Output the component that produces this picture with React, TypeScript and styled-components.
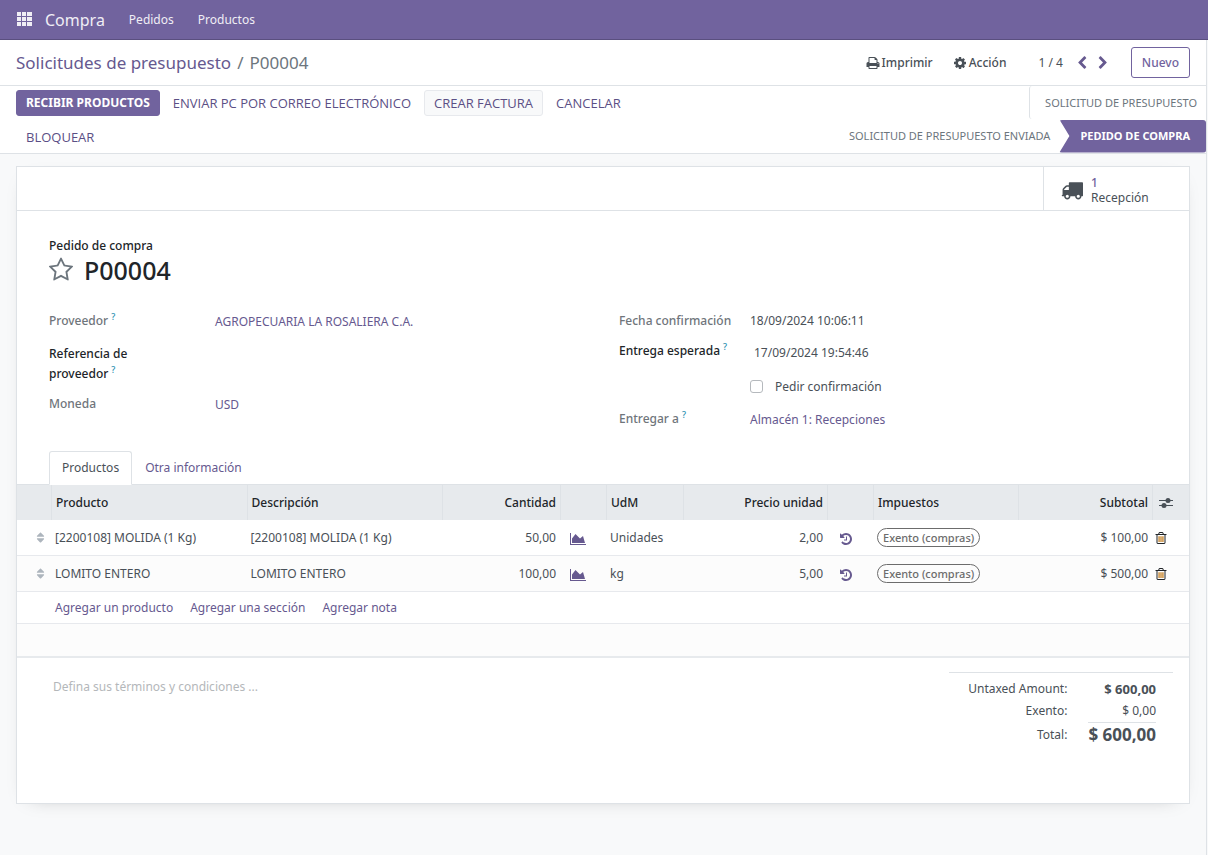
import React from 'react';
import styled, { createGlobalStyle } from 'styled-components';
import { FaSort } from 'react-icons/fa';

const brand = '#71639e';
const link = '#66598f';
const line = '#dee2e6';

const GlobalStyle = createGlobalStyle`
  * { box-sizing: border-box; }
  html, body, #root { min-height: 100vh; }
  body {
    margin: 0;
    background: #f8f9fa;
    color: #495057;
    font: 400 12px/20px "Noto Sans", "Open Sans", sans-serif;
  }
  button, input, textarea { font: inherit; color: inherit; }
  button { padding: 0; border: 0; background: none; cursor: pointer; }
  a { color: ${link}; text-decoration: none; }
`;

const Page = styled.div`
  min-height: 100vh;
  margin-right: 1px;
  border-right: 1px solid ${line};
`;

const Navbar = styled.nav`
  display: flex;
  align-items: center;
  height: 40px;
  margin-right: -2px;
  padding: 0 16px;
  gap: 24px;
  background: ${brand};
  border-bottom: 1px solid #5a4f7f;
  a { color: #f0eef5; }
`;

const AppsButton = styled.button`
  display: flex;
  margin-right: -12px;
  color: #f0eef5;
`;

const Brand = styled.a`
  font-size: 16px;
`;

const ControlPanel = styled.header`
  display: flex;
  align-items: center;
  height: 46px;
  padding: 0 16px;
  background: #fff;
  border-bottom: 1px solid ${line};
`;

const Breadcrumb = styled.nav`
  flex: 1;
  display: flex;
  gap: 6px;
  font-size: 17px;
  color: #6c757d;
`;

const Menu = styled.button`
  display: flex;
  align-items: center;
  gap: 2px;
  margin-right: 20px;
  font-weight: 500;
`;

const Pager = styled.div`
  display: flex;
  align-items: center;
  margin: 0 21px 0 12px;
  button { display: flex; margin-left: 7px; color: ${link}; }
  button:first-of-type { margin-left: 12px; }
`;

const NewButton = styled.button`
  height: 31px;
  padding: 0 10px;
  border: 1px solid ${brand};
  border-radius: 3px;
  color: ${brand};
  font-weight: 500;
`;

const StatusPanel = styled.section`
  display: flex;
  justify-content: space-between;
  padding-left: 16px;
  background: #fff;
  border-bottom: 1px solid ${line};
`;

const Actions = styled.div`
  display: flex;
  flex-wrap: wrap;
  align-content: flex-start;
  gap: 8px 3px;
  max-width: 640px;
  padding: 4px 0 3px;
`;

const Action = styled.button<{ $kind?: 'primary' | 'light' }>`
  height: 26px;
  padding: 0 9px;
  border: 1px solid ${p => (p.$kind === 'primary' ? brand : p.$kind === 'light' ? '#e7e9ed' : 'transparent')};
  border-radius: 3px;
  background: ${p => (p.$kind === 'primary' ? brand : p.$kind === 'light' ? '#f8f9fa' : 'transparent')};
  color: ${p => (p.$kind === 'primary' ? '#fff' : '#5b4f85')};
  font-family: ${p => (p.$kind === 'primary' ? 'inherit' : '"Open Sans", "Noto Sans", sans-serif')};
  font-size: ${p => (p.$kind === 'primary' ? 12 : 13)}px;
  font-weight: ${p => (p.$kind === 'primary' ? 700 : 500)};
  text-transform: uppercase;
`;

const Stages = styled.div`
  display: flex;
  flex-wrap: wrap;
  justify-content: flex-end;
  width: 384px;
`;

const Stage = styled.button<{ $first?: boolean; $current?: boolean }>`
  height: 33px;
  padding: 0 ${p => (p.$current ? 16 : 9)}px 0 ${p => (p.$current ? 21 : 15)}px;
  border-left: ${p => (p.$first ? 1 : 0)}px solid ${line};
  border-radius: 3px;
  background: ${p => (p.$current ? brand : 'transparent')};
  color: ${p => (p.$current ? '#fff' : '#6c757d')};
  font-size: 11px;
  font-weight: ${p => (p.$current ? 700 : 400)};
  text-transform: uppercase;
  ${p => p.$current && 'clip-path: polygon(0 0, 100% 0, 100% 100%, 0 100%, 10px 50%);'}
`;

const Sheet = styled.main`
  margin: 12px 16px 51px;
  padding-bottom: 56px;
  background: #fff;
  border: 1px solid ${line};
  box-shadow: 0 5px 20px -15px rgba(0, 0, 0, 0.4);
`;

const ButtonBox = styled.div`
  display: flex;
  justify-content: flex-end;
  border-bottom: 1px solid ${line};
`;

const StatButton = styled.button`
  display: flex;
  align-items: center;
  gap: 8px;
  width: 146px;
  height: 43px;
  padding: 3px 0 0 17px;
  border-left: 1px solid ${line};
  text-align: left;
  line-height: 15px;
  strong { display: block; color: ${brand}; font-weight: 500; }
`;

const Title = styled.div`
  padding: 25px 32px 0;
  color: #212529;
  font-weight: 500;
`;

const TitleRow = styled.div`
  display: flex;
  align-items: center;
  gap: 10px;
  height: 28px;
  button { display: flex; margin-left: -1px; color: #6c757d; }
  h1 { margin: 0; font-size: 25px; line-height: 32px; font-weight: 500; }
`;

const Groups = styled.div`
  display: grid;
  grid-template-columns: 538px 1fr;
  gap: 32px;
  padding: 27px 32px 0;
`;

const Group = styled.div<{ $label: number }>`
  display: grid;
  grid-template-columns: ${p => p.$label}px 1fr;
  align-content: start;
`;

const Label = styled.span<{ $strong?: boolean; $height: number }>`
  min-height: ${p => p.$height}px;
  padding-right: 60px;
  color: ${p => (p.$strong ? '#212529' : '#6f757b')};
  font-weight: 500;
  sup { margin-left: 3px; color: #2a8fb0; font-size: 9px; line-height: 0; }
`;

const WideLabel = styled(Label)`
  padding-right: 0;
`;

const Value = styled.div<{ $inset?: boolean }>`
  padding-left: ${p => (p.$inset ? 4 : 0)}px;
  line-height: ${p => (p.$inset ? 24 : 20)}px;
  a { line-height: 22px; }
`;

const CheckValue = styled.label`
  display: flex;
  align-items: flex-start;
  gap: 12px;
  padding-top: 2px;
  input {
    appearance: none;
    width: 13px;
    height: 13px;
    margin: 3px 0 0;
    border: 1px solid #b5b9bd;
    border-radius: 3px;
    background: #fff;
  }
`;

const Tabs = styled.div`
  display: flex;
  margin-top: 12px;
  padding: 0 32px;
  border-bottom: 1px solid ${line};
`;

const Tab = styled.button<{ $active?: boolean }>`
  height: 34px;
  margin-bottom: -1px;
  padding: 0 12px;
  border: 1px solid ${p => (p.$active ? line : 'transparent')};
  border-bottom-color: ${p => (p.$active ? '#fff' : 'transparent')};
  border-radius: 3px 3px 0 0;
  background: ${p => (p.$active ? '#fff' : 'transparent')};
  color: ${p => (p.$active ? '#495057' : link)};
`;

const Lines = styled.table`
  width: 100%;
  border-collapse: separate;
  border-spacing: 0;
  table-layout: fixed;
  border-bottom: 2px solid #e7eaed;
  th, td { padding: 0 4px; text-align: left; }
  th {
    height: 35px;
    background: #e7eaed;
    border-left: 1px solid ${line};
    color: #212529;
    font-weight: 500;
  }
  th:first-child { border-left: 0; }
  td { border-bottom: 1px solid #e7e9ed; }
  tbody tr:nth-child(even) { background: #fcfcfc; }
  tbody tr:last-child td { border-bottom: 0; }
  svg { display: block; }
`;

const Row = styled.tr<{ $height: number }>`
  height: ${p => p.$height}px;
`;

const Num = styled.td`
  && { text-align: right; }
`;

const NumHead = styled.th`
  && { text-align: right; }
`;

const Handle = styled.td`
  color: #adb5bd;
  && { padding-left: 17px; }
`;

const ColumnsButton = styled.button`
  display: flex;
  padding-left: 2px;
`;

const IconButton = styled.button<{ $indent: number }>`
  display: flex;
  padding: 2px 0 0 ${p => p.$indent}px;
  color: ${link};
`;

const DeleteButton = styled.button`
  display: flex;
  margin-left: -2px;
  color: #212529;
`;

const Tag = styled.span`
  display: inline-block;
  height: 19px;
  padding: 0 5px;
  border: 1px solid #6c6c6c;
  border-radius: 10px;
  color: #6c6c6c;
  font-size: 11px;
  line-height: 17px;
  font-weight: 500;
  white-space: nowrap;
`;

const AddLinks = styled.div`
  display: flex;
  gap: 17px;
`;

const Footer = styled.div`
  display: flex;
  justify-content: space-between;
  align-items: flex-start;
  padding: 14px 16px 0 36px;
`;

const Terms = styled.textarea`
  width: 400px;
  height: 60px;
  margin-top: 5px;
  padding: 0;
  border: 0;
  resize: none;
  background: transparent;
  &::placeholder { color: #b4b7ba; opacity: 1; }
`;

const Totals = styled.table`
  width: 224px;
  padding: 5px 17px 0 0;
  border-top: 1px solid ${line};
  border-spacing: 0;
  th, td { height: 22px; padding: 0; text-align: right; white-space: nowrap; }
  th { width: 100%; font-weight: 400; }
  td { padding-left: 21px; }
`;

const Subtotal = styled.b`
  font-size: 13px;
`;

const GrandTotal = styled.b`
  display: block;
  border-top: 1px solid ${line};
  font-size: 17px;
  line-height: 24px;
`;

const items = [
  { name: '[2200108] MOLIDA (1 Kg)', qty: '50,00', unit: 'Unidades', price: '2,00', subtotal: '$ 100,00' },
  { name: 'LOMITO ENTERO', qty: '100,00', unit: 'kg', price: '5,00', subtotal: '$ 500,00' },
];

const paths = {
  print: 'M448 1536h896v-256h-896v256zm0-640h896v-384h-160q-40 0-68-28t-28-68v-160h-640v640zm1152 64q0-26-19-45t-45-19-45 19-19 45 19 45 45 19 45-19 19-45zm128 0v416q0 13-9.5 22.5t-22.5 9.5h-224v160q0 40-28 68t-68 28h-960q-40 0-68-28t-28-68v-160h-224q-13 0-22.5-9.5t-9.5-22.5v-416q0-79 56.5-135.5t135.5-56.5h64v-544q0-40 28-68t68-28h672q40 0 88 20t76 48l152 152q28 28 48 76t20 88v256h64q79 0 135.5 56.5t56.5 135.5z',
  cog: 'M1152 896q0-106-75-181t-181-75-181 75-75 181 75 181 181 75 181-75 75-181zm512-109v222q0 12-8 23t-20 13l-185 28q-19 54-39 91 35 50 107 138 10 12 10 25t-9 23q-27 37-99 108t-94 71q-12 0-26-9l-138-108q-44 23-91 38-16 136-29 186-7 28-36 28h-222q-14 0-24.5-8.5t-11.5-21.5l-28-184q-49-16-90-37l-141 107q-10 9-25 9-14 0-25-11-126-114-165-168-7-10-7-23 0-12 8-23 15-21 51-66.5t54-70.5q-27-50-41-99l-183-27q-13-2-21-12.5t-8-23.5v-222q0-12 8-23t19-13l186-28q14-46 39-92-40-57-107-138-10-12-10-24 0-10 9-23 26-36 98.5-107.5t94.5-71.5q13 0 26 10l138 107q44-23 91-38 16-136 29-186 7-28 36-28h222q14 0 24.5 8.5t11.5 21.5l28 184q49 16 90 37l142-107q9-9 24-9 13 0 25 10 129 119 165 170 7 8 7 22 0 12-8 23-15 21-51 66.5t-54 70.5q26 50 41 98l183 28q13 2 21 12.5t8 23.5z',
  left: 'M1427 301l-531 531 531 531q19 19 19 45t-19 45l-166 166q-19 19-45 19t-45-19l-742-742q-19-19-19-45t19-45l742-742q19-19 45-19t45 19l166 166q19 19 19 45t-19 45z',
  right: 'M1363 877l-742 742q-19 19-45 19t-45-19l-166-166q-19-19-19-45t19-45l531-531-531-531q-19-19-19-45t19-45l166-166q19-19 45-19t45 19l742 742q19 19 19 45t-19 45z',
  truck: 'M640 1408q0-52-38-90t-90-38-90 38-38 90 38 90 90 38 90-38 38-90zm-384-512h384v-256h-158q-13 0-22 9l-195 195q-9 9-9 22v30zm1280 512q0-52-38-90t-90-38-90 38-38 90 38 90 90 38 90-38 38-90zm256-1088v1024q0 15-4 26.5t-13.5 18.5-16.5 11.5-23.5 6-22.5 2-25.5 0-22.5-.5q0 106-75 181t-181 75-181-75-75-181h-384q0 106-75 181t-181 75-181-75-75-181h-64q-3 0-22.5.5t-25.5 0-22.5-2-23.5-6-16.5-11.5-13.5-18.5-4-26.5q0-26 19-45t45-19v-320q0-8-.5-35t0-38 2.5-34.5 6.5-37 14-30.5 22.5-30l198-198q19-19 50.5-32t58.5-13h160v-192q0-26 19-45t45-19h1024q26 0 45 19t19 45z',
  star: 'M1201 1004l306-297-422-62-189-382-189 382-422 62 306 297-73 421 378-199 377 199zm527-357q0 22-26 48l-363 354 86 500q1 7 1 20 0 50-41 50-19 0-40-12l-449-236-449 236q-22 12-40 12-21 0-31.5-14.5t-10.5-35.5q0-6 2-20l86-500-364-354q-25-27-25-48 0-37 56-46l502-73 225-455q19-41 49-41t49 41l225 455 502 73q56 9 56 46z',
  chart: 'M2048 1536v128h-2048v-1536h128v1408h1920zm-384-1024l256 896h-1664v-576l448-576 576 576z',
  history: 'M1664 896q0 156-61 298t-164 245-245 164-298 61q-172 0-327-72.5t-264-204.5q-7-10-6.5-22.5t8.5-20.5l137-138q10-9 25-9 16 2 23 12 73 95 179 147t225 52q104 0 198.5-40.5t163.5-109.5 109.5-163.5 40.5-198.5-40.5-198.5-109.5-163.5-163.5-109.5-198.5-40.5q-98 0-188 35.5t-160 101.5l137 138q31 30 14 69-17 40-59 40h-448q-26 0-45-19t-19-45v-448q0-42 40-59 39-17 69 14l130 129q107-101 244.5-156.5t284.5-55.5q156 0 298 61t245 164 164 245 61 298zm-640-288v448q0 14-9 23t-23 9h-320q-14 0-23-9t-9-23v-64q0-14 9-23t23-9h224v-352q0-14 9-23t23-9h64q14 0 23 9t9 23z',
  bin: 'M1344 1460v-948h-896v948q0 22 7 40.5t14.5 27 10.5 8.5h832q3 0 10.5-8.5t14.5-27 7-40.5zm-672-1076h448l-48-117q-7-9-17-11h-317q-10 2-17 11zm928 32v64q0 14-9 23t-23 9h-96v948q0 83-47 143.5t-113 60.5h-832q-66 0-113-58.5t-47-141.5v-952h-96q-14 0-23-9t-9-23v-64q0-14 9-23t23-9h309l70-167q15-37 54-63t79-26h320q40 0 79 26t54 63l70 167h309q14 0 23 9t9 23z',
};

const Icon = ({ name, size = 14, width = 1792 }: { name: keyof typeof paths; size?: number; width?: number }) => (
  <svg width={(size * width) / 1792} height={size} viewBox={`0 0 ${width} 1792`} fill="currentColor" aria-hidden="true">
    <path d={paths[name]} />
    {name === 'bin' && <path fill="#c98a35" d="M560 660h180v740h-180zM806 660h180v740h-180zM1052 660h180v740h-180z" />}
  </svg>
);

const AppsIcon = () => (
  <svg width="17" height="15" viewBox="0 0 17 15" fill="currentColor" aria-hidden="true">
    {[0, 5, 10].map(y => [1, 6, 11].map(x => <rect key={`${x}-${y}`} x={x} y={y} width={x === 11 ? 5 : 4} height="4" />))}
  </svg>
);

const SlidersIcon = () => (
  <svg width="14" height="12" viewBox="0 0 14 12" fill="#495057" aria-hidden="true">
    <path d="M0 3h14v1H0zM0 8h14v1H0z" />
    <circle cx="9" cy="3.5" r="2.5" />
    <circle cx="5" cy="8.5" r="2.5" />
  </svg>
);

export default function App() {
  return (
    <>
      <GlobalStyle />
      <Page>
        <Navbar>
          <AppsButton aria-label="Aplicaciones"><AppsIcon /></AppsButton>
          <Brand href="#">Compra</Brand>
          <a href="#">Pedidos</a>
          <a href="#">Productos</a>
        </Navbar>
        <ControlPanel>
          <Breadcrumb>
            <a href="#">Solicitudes de presupuesto</a>
            <span>/</span>
            <span>P00004</span>
          </Breadcrumb>
          <Menu><Icon name="print" />Imprimir</Menu>
          <Menu><Icon name="cog" />Acción</Menu>
          <Pager>
            1 / 4
            <button aria-label="Anterior"><Icon name="left" /></button>
            <button aria-label="Siguiente"><Icon name="right" /></button>
          </Pager>
          <NewButton>Nuevo</NewButton>
        </ControlPanel>
        <StatusPanel>
          <Actions>
            <Action $kind="primary">Recibir productos</Action>
            <Action>Enviar PC por correo electrónico</Action>
            <Action $kind="light">Crear factura</Action>
            <Action>Cancelar</Action>
            <Action>Bloquear</Action>
          </Actions>
          <Stages>
            <Stage $first>Solicitud de presupuesto</Stage>
            <Stage>Solicitud de presupuesto enviada</Stage>
            <Stage $current>Pedido de compra</Stage>
          </Stages>
        </StatusPanel>
        <Sheet>
          <ButtonBox>
            <StatButton>
              <Icon name="truck" size={22} />
              <span><strong>1</strong>Recepción</span>
            </StatButton>
          </ButtonBox>
          <Title>
            Pedido de compra
            <TitleRow>
              <button aria-label="Prioridad"><Icon name="star" size={26} /></button>
              <h1>P00004</h1>
            </TitleRow>
          </Title>
          <Groups>
            <Group $label={166}>
              <Label $height={33}>Proveedor<sup>?</sup></Label>
              <Value><a href="#">AGROPECUARIA LA ROSALIERA C.A.</a></Value>
              <Label $strong $height={50}>Referencia de proveedor<sup>?</sup></Label>
              <Value />
              <Label $height={30}>Moneda</Label>
              <Value><a href="#">USD</a></Value>
            </Group>
            <Group $label={131}>
              <WideLabel $height={30}>Fecha confirmación</WideLabel>
              <Value>18/09/2024 10:06:11</Value>
              <WideLabel $strong $height={34}>Entrega esperada<sup>?</sup></WideLabel>
              <Value $inset>17/09/2024 19:54:46</Value>
              <WideLabel $height={34} />
              <CheckValue><input type="checkbox" />Pedir confirmación</CheckValue>
              <WideLabel $height={30}>Entregar a<sup>?</sup></WideLabel>
              <Value><a href="#">Almacén 1: Recepciones</a></Value>
            </Group>
          </Groups>
          <Tabs>
            <Tab $active>Productos</Tab>
            <Tab>Otra información</Tab>
          </Tabs>
          <Lines>
            <colgroup>
              <col style={{ width: 34 }} />
              <col />
              <col />
              <col style={{ width: 118 }} />
              <col style={{ width: 46 }} />
              <col style={{ width: 77 }} />
              <col style={{ width: 144 }} />
              <col style={{ width: 46 }} />
              <col style={{ width: 145 }} />
              <col style={{ width: 134 }} />
              <col style={{ width: 37 }} />
            </colgroup>
            <thead>
              <tr>
                <th /><th>Producto</th><th>Descripción</th><NumHead>Cantidad</NumHead><th />
                <th>UdM</th><NumHead>Precio unidad</NumHead><th /><th>Impuestos</th><NumHead>Subtotal</NumHead>
                <th><ColumnsButton aria-label="Columnas"><SlidersIcon /></ColumnsButton></th>
              </tr>
            </thead>
            <tbody>
              {items.map(i => (
                <Row key={i.name} $height={36}>
                  <Handle><FaSort size={13} /></Handle>
                  <td>{i.name}</td>
                  <td>{i.name}</td>
                  <Num>{i.qty}</Num>
                  <td><IconButton $indent={6} aria-label="Pronóstico"><Icon name="chart" width={2048} /></IconButton></td>
                  <td>{i.unit}</td>
                  <Num>{i.price}</Num>
                  <td><IconButton $indent={8} aria-label="Historial"><Icon name="history" /></IconButton></td>
                  <td><Tag>Exento (compras)</Tag></td>
                  <Num>{i.subtotal}</Num>
                  <td><DeleteButton aria-label="Eliminar"><Icon name="bin" /></DeleteButton></td>
                </Row>
              ))}
              <Row $height={32}>
                <td />
                <td colSpan={10}>
                  <AddLinks>
                    <a href="#">Agregar un producto</a>
                    <a href="#">Agregar una sección</a>
                    <a href="#">Agregar nota</a>
                  </AddLinks>
                </td>
              </Row>
              <Row $height={32}><td colSpan={11} /></Row>
            </tbody>
          </Lines>
          <Footer>
            <Terms aria-label="Términos y condiciones" placeholder="Defina sus términos y condiciones ..." />
            <Totals>
              <tbody>
                <tr><th>Untaxed Amount:</th><td><Subtotal>$ 600,00</Subtotal></td></tr>
                <tr><th>Exento:</th><td>$ 0,00</td></tr>
                <tr><th>Total:</th><td><GrandTotal>$ 600,00</GrandTotal></td></tr>
              </tbody>
            </Totals>
          </Footer>
        </Sheet>
      </Page>
    </>
  );
}
